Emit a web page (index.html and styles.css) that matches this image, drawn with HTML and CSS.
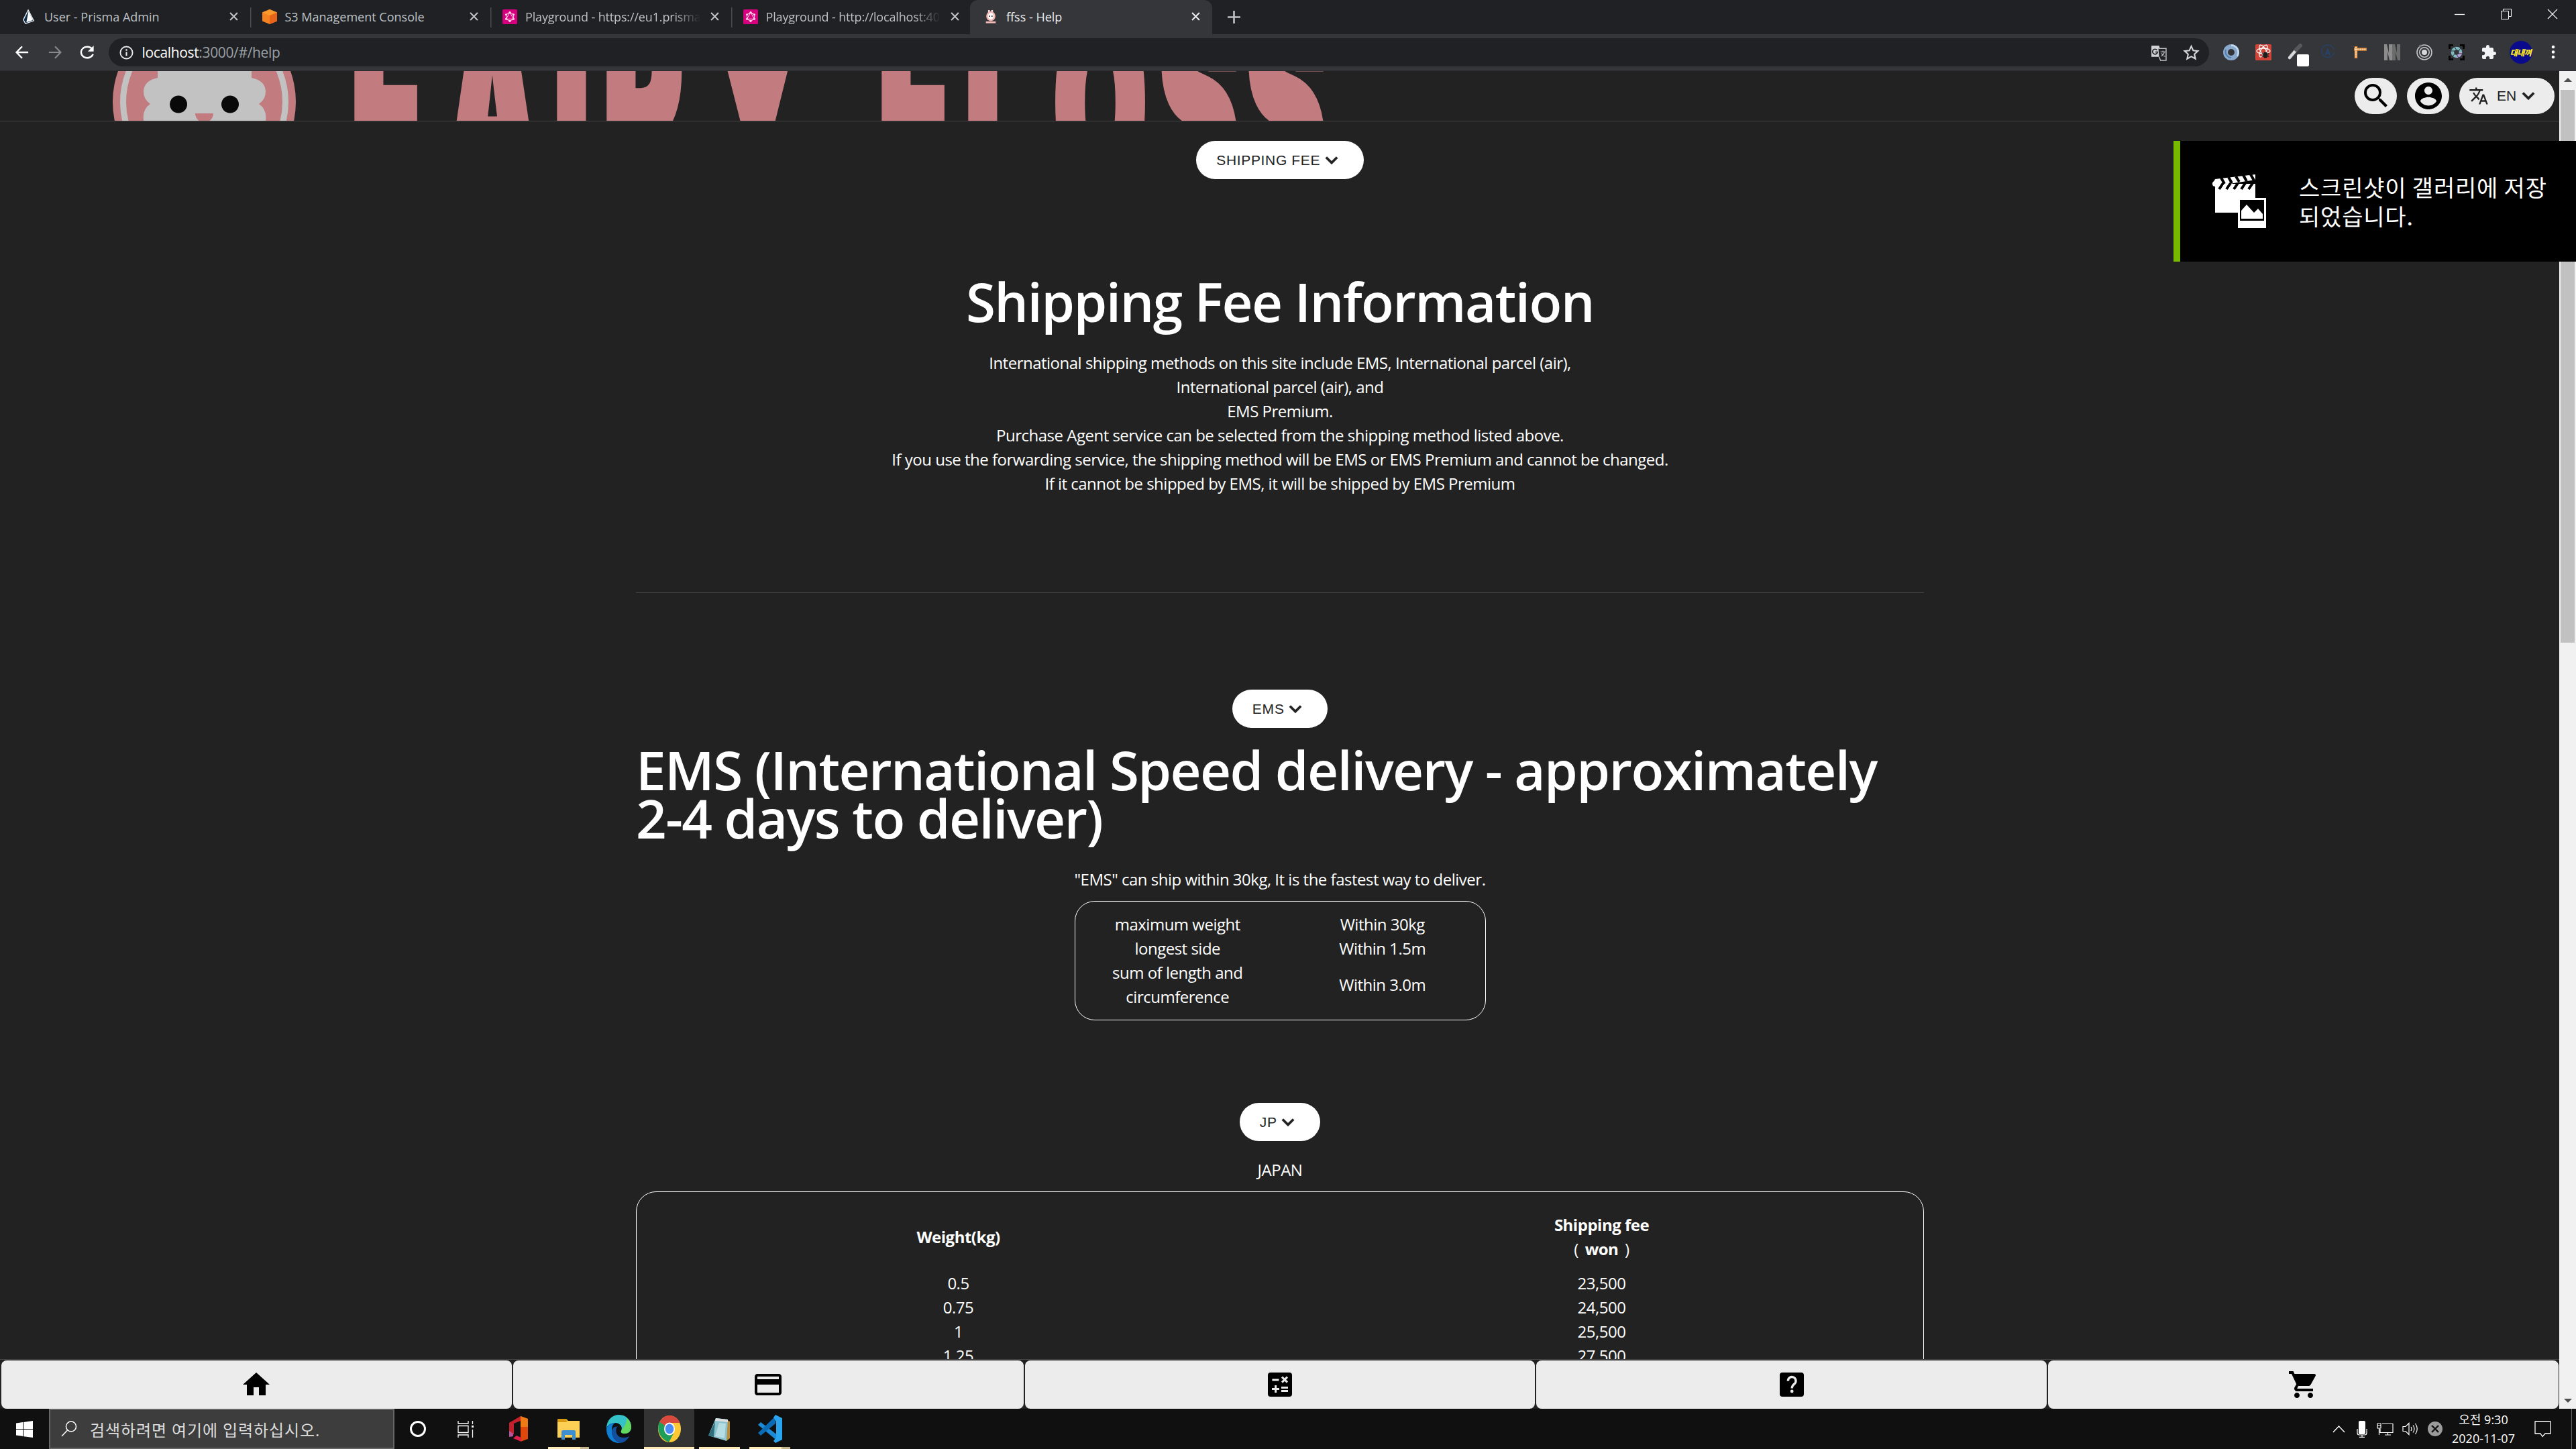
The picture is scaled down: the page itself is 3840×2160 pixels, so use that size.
FILE: index.html
```html
<!DOCTYPE html>
<html lang="en">
<head>
<meta charset="utf-8">
<title>ffss - Help</title>
<link rel="stylesheet" href="styles.css">
</head>
<body>
<svg width="0" height="0" class="defs">
  <defs>
    <symbol id="chevron" viewBox="0 0 24 24"><path d="M16.59 8.09 12 12.67 7.41 8.09 5.7 9.8l6.3 6.3 6.3-6.3z"/></symbol>
    <symbol id="close" viewBox="0 0 12 12"><path d="M1 1l10 10M11 1L1 11" stroke="currentColor" stroke-width="2" fill="none"/></symbol>
    <symbol id="graphql" viewBox="0 0 24 24"><rect width="24" height="24" rx="2" fill="#d6007e"/><path d="M12 5l6 3.5v7L12 19l-6-3.500v-7zM12 5l6 10.500H6z" fill="none" stroke="#fbd" stroke-width="1.200"/><g fill="#fde"><circle cx="12" cy="5" r="1.700"/><circle cx="18" cy="8.500" r="1.700"/><circle cx="18" cy="15.500" r="1.700"/><circle cx="12" cy="19" r="1.700"/><circle cx="6" cy="15.500" r="1.700"/><circle cx="6" cy="8.500" r="1.700"/></g></symbol>
  </defs>
</svg>

<div class="tabstrip">
  <div class="tab"><svg class="fav" viewBox="0 0 24 24"><path d="M11 1 3 17l3.500 6L20 18.500z" fill="#0f2d4a" stroke="#dfe6ee" stroke-width="1.500"/><path d="M11.500 3 8 21l10.500-3.500z" fill="#fff"/></svg><span class="tab-title">User - Prisma Admin</span><svg class="x"><use href="#close"/></svg></div>
  <div class="tab sep"><svg class="fav" viewBox="0 0 24 24"><path d="M12 0l12 5v14l-12 5L0 19V5z" fill="#f58220"/><path d="M12 0l12 5-12 5L0 5z" fill="#fb9a2c"/><path d="M12 10l12-5v14l-12 5z" fill="#e8641b"/></svg><span class="tab-title">S3 Management Console</span><svg class="x"><use href="#close"/></svg></div>
  <div class="tab sep"><svg class="fav"><use href="#graphql"/></svg><span class="tab-title fade">Playground - https://eu1.prisma.</span><svg class="x"><use href="#close"/></svg></div>
  <div class="tab sep"><svg class="fav"><use href="#graphql"/></svg><span class="tab-title fade">Playground - http://localhost:40</span><svg class="x"><use href="#close"/></svg></div>
  <div class="tab active"><svg class="fav" viewBox="0 0 24 24"><path d="M9 7V1M14 7V1" stroke="#f7d5d3" stroke-width="3"/><ellipse cx="12" cy="11" rx="7.500" ry="8" fill="#f3b9b6"/><ellipse cx="12" cy="11" rx="4.500" ry="5.500" fill="#fff"/><circle cx="10" cy="11" r="1"/><circle cx="14" cy="11" r="1"/><path d="M4 21h16" stroke="#f3b9b6" stroke-width="3"/></svg><span class="tab-title">ffss - Help</span><svg class="x"><use href="#close"/></svg></div>
  <svg class="plus" viewBox="0 0 18 18"><path d="M9 0v18M0 9h18" stroke="#bdc1c6" stroke-width="2.500"/></svg>
  <div class="winctl">
    <svg viewBox="0 0 16 16"><path d="M0 8.500h15" stroke="#fff" stroke-width="1.300"/></svg>
    <svg viewBox="0 0 16 16"><path d="M.5 3.500h11v12H.5zM3.500 3.500v-3h12v11h-4" stroke="#fff" fill="none"/></svg>
    <svg viewBox="0 0 16 16"><path d="M1 1l14 14M15 1L1 15" stroke="#fff" stroke-width="1.200"/></svg>
  </div>
</div>

<div class="toolbar">
  <svg class="tb" viewBox="0 0 24 24"><path d="M22 12H3M12 2.500 2.800 12l9.200 9.500" stroke="#fff" stroke-width="2.600" fill="none"/></svg>
  <svg class="tb" viewBox="0 0 24 24"><path d="M2 12h19M12 2.500l9.200 9.500-9.200 9.500" stroke="#85888c" stroke-width="2.400" fill="none"/></svg>
  <svg class="tb" viewBox="0 0 24 24"><path d="M20 6.500A10 9 0 1 0 21.500 15" stroke="#fff" stroke-width="2.600" fill="none"/><path d="M22.500 1v9.500H13z" fill="#fff"/></svg>
  <div class="omnibox">
    <svg class="info" viewBox="0 0 22 22"><circle cx="11" cy="11" r="9.500" stroke="#e8eaed" stroke-width="2" fill="none"/><path d="M11 10v6M11 5.500v2.500" stroke="#e8eaed" stroke-width="2.200"/></svg>
    <span class="url"><b>localhost</b>:3000/#/help</span>
    <svg class="ob" viewBox="0 0 24 24"><path d="M2 2h11l4 16H2z" fill="#d0d2d5"/><path d="M12 6h11v17H15l-2-5" fill="#202124" stroke="#bdc1c6" stroke-width="1.400"/><path d="M10 8.300A3.600 3.600 0 1 0 10.800 11H7.500" fill="none" stroke="#202124" stroke-width="1.600"/><path d="M15 11h7M18.500 9v2M20.500 11c-.5 3-2.500 5-4.500 6M16.500 13c1 2 3 4 5 4.500" stroke="#bdc1c6" fill="none" stroke-width="1.200"/></svg>
    <svg class="ob" viewBox="0 0 24 24"><path d="M12 2.800l2.800 6.200 6.700.7-5 4.500 1.400 6.600L12 17.400l-5.900 3.400 1.400-6.600-5-4.500 6.700-.7z" fill="none" stroke="#d7d9dc" stroke-width="2"/></svg>
  </div>
  <div class="exts">
    <svg viewBox="0 0 24 24"><circle cx="12" cy="12" r="8.500" fill="none" stroke="#88a9cb" stroke-width="7"/><path d="M12 1.500a10.500 10.500 0 0 1 9 16" fill="none" stroke="#c7dcf0" stroke-width="2.500"/><path d="M4 8a9 9 0 0 0 8 12" fill="none" stroke="#557fae" stroke-width="2"/></svg>
    <svg viewBox="0 0 24 24"><rect width="24" height="24" rx="1.500" fill="#cf4438"/><g fill="none" stroke="#fff" stroke-width="1.300"><ellipse cx="12" cy="10" rx="10" ry="4"/><ellipse cx="12" cy="10" rx="10" ry="4" transform="rotate(60 12 10)"/><ellipse cx="12" cy="10" rx="10" ry="4" transform="rotate(120 12 10)"/></g><ellipse cx="15" cy="16" rx="3.500" ry="4.500" fill="#1c1c1c"/><path d="M9.500 13l11 6M9.500 19l11-6M10 16h10" stroke="#1c1c1c"/></svg>
    <svg viewBox="0 0 24 24" class="pip"><path d="M3 20 14 7" stroke="#d8d8d8" stroke-width="4.500" stroke-linecap="round"/><path d="M13 8l6-6" stroke="#55585c" stroke-width="6" stroke-linecap="round"/><rect x="14" y="15" width="18" height="18" rx="2" fill="#fff"/></svg>
    <svg viewBox="0 0 24 24"><path d="M21 7.500A9.300 9.300 0 1 0 21.300 12" fill="none" stroke="#25446b" stroke-width="1.400"/><path d="M8.500 16.500l3.500-9 3.500 9M9.800 13.500h4.500" stroke="#25446b" stroke-width="2" fill="none"/></svg>
    <svg viewBox="0 0 24 24"><path d="M6 3v18M3 7.500h19" stroke="#d98237" stroke-width="4.500"/><path d="M6 4v16M4 7.500h17" stroke="#f8dfb8" stroke-width="2" stroke-dasharray="2 .7"/></svg>
    <svg viewBox="0 0 24 24"><path d="M0 0h4l3 13V0h5v24H8L5 11v13H0z" fill="#8c8c8c"/><path d="M12 0h4l3 13V0h5v24h-4l-3-13v13h-5z" fill="#6c6c6c"/></svg>
    <svg viewBox="0 0 24 24"><circle cx="12" cy="12" r="11" fill="none" stroke="#c4c5c7" stroke-width="1.600"/><circle cx="12" cy="12" r="7.200" fill="none" stroke="#c4c5c7" stroke-width="1.600"/><circle cx="12" cy="12" r="4" fill="#d5d6d8"/><circle cx="6" cy="2.500" r="2" fill="#76787b"/></svg>
    <svg viewBox="0 0 24 24"><path d="M1.500 7V1.500H7M17 1.500h5.500V7M22.500 17v5.500H17M7 22.500H1.500V17" fill="none" stroke="#050505" stroke-width="3"/><circle cx="12" cy="12" r="6" fill="none" stroke="#7fb9bd" stroke-width="4.500"/><path d="M12 18a6 6 0 0 0 6-6" fill="none" stroke="#b9a3dc" stroke-width="4.500"/><path d="M9 4l3 5M18 6l-3.500 5M20 14h-6M15 20l-3-5M6 18l4-4.500M4 10h6" stroke="#2b3440" stroke-width="1"/></svg>
    <svg viewBox="0 0 24 24"><path d="M20.500 11H19V7c0-1.100-.9-2-2-2h-4V3.500a2.500 2.500 0 0 0-5 0V5H4c-1.100 0-1.990.9-1.990 2v3.800H3.500a2.700 2.700 0 0 1 0 5.400H2V20c0 1.100.9 2 2 2h3.800v-1.500a2.700 2.700 0 0 1 5.400 0V22H17c1.100 0 2-.9 2-2v-4h1.500a2.500 2.500 0 0 0 0-5z" fill="#f1f3f4"/></svg>
    <span class="avatar">대내껴</span>
    <svg viewBox="0 0 24 24"><g fill="#fff"><circle cx="12" cy="4" r="2.300"/><circle cx="12" cy="11.500" r="2.300"/><circle cx="12" cy="19" r="2.300"/></g></svg>
  </div>
</div>

<div class="viewport">
  <div class="page">
    <header class="apphead">
      <svg class="logo" viewBox="160 106 1840 74">
        <circle cx="304.500" cy="152" r="136.500" fill="#c27c80"/>
        <circle cx="304.500" cy="152" r="121" fill="none" stroke="#c2c2c2" stroke-width="9"/>
        <path d="M235 96v20q-20 4-21 20 0 12 10 19-12 8-10 24 2 16 20 20h142q18-4 20-20 2-16-10-24 10-7 10-19-1-16-21-20V96z" fill="#c2c2c2"/>
        <ellipse cx="266" cy="155.500" rx="13" ry="13" fill="#090909"/><ellipse cx="343" cy="155.500" rx="13" ry="13" fill="#090909"/>
        <path d="M291 169h27q0 8-9 14h-9q-9-6-9-14z" fill="#c27c80"/>
        <text class="wordmark" transform="translate(0 297) scale(1 2.240)" y="0" x="524 664 826 900 1060 1260 1310 1439 1571 1727 1857">FAIRY FLOSS</text>
      </svg>
      <div class="headbtns">
        <span class="rbtn"><svg viewBox="0 0 24 24"><path d="M15.500 14h-.79l-.28-.27A6.471 6.471 0 0 0 16 9.500 6.500 6.500 0 1 0 9.500 16c1.610 0 3.090-.59 4.230-1.570l.27.28v.79l5 4.990L20.490 19l-4.990-5zm-6 0C7.010 14 5 11.990 5 9.500S7.010 5 9.500 5 14 7.010 14 9.500 11.990 14 9.500 14z"/></svg></span>
        <span class="rbtn"><svg viewBox="0 0 24 24"><path d="M12 2C6.480 2 2 6.480 2 12s4.480 10 10 10 10-4.480 10-10S17.520 2 12 2zm0 3c1.660 0 3 1.340 3 3s-1.340 3-3 3-3-1.340-3-3 1.340-3 3-3zm0 14.200c-2.500 0-4.710-1.280-6-3.220.03-1.990 4-3.080 6-3.080 1.990 0 5.970 1.090 6 3.080-1.290 1.940-3.500 3.220-6 3.220z"/></svg></span>
        <span class="rbtn lang"><svg class="tr" viewBox="0 0 24 24"><path d="M12.870 15.070l-2.540-2.510.03-.03A17.520 17.520 0 0 0 14.070 6H17V4h-7V2H8v2H1v1.990h11.170C11.500 7.920 10.440 9.750 9 11.350 8.070 10.320 7.300 9.190 6.690 8h-2c.73 1.630 1.730 3.170 2.980 4.560l-5.090 5.020L4 19l5-5 3.110 3.110.76-2.040zM18.500 10h-2L12 22h2l1.120-3h4.750L21 22h2l-4.500-12zm-2.620 7l1.620-4.330L19.120 17h-3.240z"/></svg><span>EN</span><svg class="chev"><use href="#chevron"/></svg></span>
      </div>
    </header>

    <main class="content">
      <button class="pill first"><span>SHIPPING FEE</span><svg class="chev"><use href="#chevron"/></svg></button>
      <h1>Shipping Fee Information</h1>
      <p class="intro">International shipping methods on this site include EMS, International parcel (air),<br>International parcel (air), and<br>EMS Premium.<br>Purchase Agent service can be selected from the shipping method listed above.<br>If you use the forwarding service, the shipping method will be EMS or EMS Premium and cannot be changed.<br>If it cannot be shipped by EMS, it will be shipped by EMS Premium</p>
      <hr>
      <button class="pill"><span>EMS</span><svg class="chev"><use href="#chevron"/></svg></button>
      <h2>EMS (International Speed delivery - approximately<br>2-4 days to deliver)</h2>
      <p class="lead">"EMS" can ship within 30kg, It is the fastest way to deliver.</p>
      <div class="box limits">
        <div>maximum weight</div><div>Within 30kg</div>
        <div>longest side</div><div>Within 1.5m</div>
        <div>sum of length and circumference</div><div>Within 3.0m</div>
      </div>
      <button class="pill jp"><span>JP</span><svg class="chev"><use href="#chevron"/></svg></button>
      <p class="country">JAPAN</p>
      <div class="box fees">
        <div class="th">Weight(kg)</div><div class="th">Shipping fee<br><span class="unit"><i>(</i> won <i>)</i></span></div>
        <div>0.5</div><div>23,500</div>
        <div>0.75</div><div>24,500</div>
        <div>1</div><div>25,500</div>
        <div>1.25</div><div>27,500</div>
      </div>
    </main>

    <nav class="bottomnav">
      <span><svg viewBox="0 0 24 24"><path d="M10 20v-6h4v6h5v-8h3L12 3 2 12h3v8z"/></svg></span>
      <span><svg viewBox="0 0 24 24"><path d="M20 4H4c-1.110 0-1.990.89-1.990 2L2 18c0 1.110.89 2 2 2h16c1.110 0 2-.89 2-2V6c0-1.110-.89-2-2-2zm0 14H4v-6h16v6zm0-10H4V6h16v2z"/></svg></span>
      <span><svg viewBox="0 0 24 24"><rect x="3" y="3" width="18" height="18" rx="2"/><path d="M6.200 8.500h5M6 15.300h5.500M8.800 12.500V18M13 14.200h5M13 16.800h5M13.500 6.300l4 4M17.500 6.300l-4 4" stroke="#ececec" stroke-width="1.500" fill="none"/></svg></span>
      <span><svg viewBox="0 0 24 24"><rect x="3" y="3" width="18" height="18" rx="2"/><path d="M9.200 9.300a2.900 2.900 0 1 1 5 1.900c-1.200 1.100-2.100 1.700-2.100 3.500" stroke="#ececec" stroke-width="1.700" fill="none"/><circle cx="12.100" cy="17" r="1.200" fill="#ececec"/></svg></span>
      <span><svg viewBox="0 0 24 24"><path d="M7 18c-1.100 0-1.990.9-1.990 2S5.900 22 7 22s2-.9 2-2-.9-2-2-2zM1 2v2h2l3.600 7.590-1.350 2.450c-.16.28-.25.61-.25.96 0 1.100.9 2 2 2h12v-2H7.420c-.14 0-.25-.11-.25-.25l.03-.12.9-1.630h7.450c.75 0 1.410-.41 1.750-1.030l3.580-6.490A1.003 1.003 0 0 0 20 4H5.210l-.94-2H1zm16 16c-1.100 0-1.990.9-1.990 2s.89 2 1.990 2 2-.9 2-2-.9-2-2-2z"/></svg></span>
    </nav>
  </div>
  <div class="scrollbar">
    <svg viewBox="0 0 12 6"><path d="M0 6l6-6 6 6z" fill="#505050"/></svg>
    <div class="thumb"></div>
    <svg class="down" viewBox="0 0 12 6"><path d="M0 0l6 6 6-6z" fill="#505050"/></svg>
  </div>
</div>

<div class="toast">
  <svg viewBox="0 0 80 80"><path d="M0 14l4-7 60-7v8L6 17z" fill="#fff"/><path d="M13 5l5 9M24 4l5 9M35 3l5 8M46 1l5 9M57 0l5 9" stroke="#000" stroke-width="4"/><circle cx="4" cy="14" r="4" fill="#fff"/><path d="M4 14h60v21H38v22H4z" fill="#fff"/><path d="M16 13l-6 9M27 13l-6 9M38 13l-6 9M49 13l-6 9M60 13l-6 9" stroke="#000" stroke-width="4"/><path d="M38 35h42v45H38z" fill="#fff"/><path d="M41 38h36v31H41z" fill="#000"/><path d="M43 66V54l8-9 11 12 6-6 7 8v7z" fill="#fff"/></svg>
  <p>스크린샷이 갤러리에 저장<br>되었습니다.</p>
</div>

<footer class="taskbar">
  <div class="cell start"><svg width="25" height="25" viewBox="0 0 24 24"><path d="M0 3.300 10 2v9.500H0zM11 1.800 24 0v11.500H11zM0 12.500h10V22L0 20.600zM11 12.500h13V24l-13-1.800z" fill="#fff"/></svg></div>
  <div class="search"><svg width="24" height="24" viewBox="0 0 24 24"><circle cx="15" cy="8.500" r="7.500" fill="none" stroke="#fff" stroke-width="1.500"/><path d="M9.500 14 1 23" stroke="#fff" stroke-width="1.500"/></svg><span>검색하려면 여기에 입력하십시오.</span></div>
  <div class="cell"><svg width="26" height="26" viewBox="0 0 26 26"><circle cx="13" cy="13" r="10.500" fill="none" stroke="#fff" stroke-width="3"/></svg></div>
  <div class="cell tv"><svg width="25" height="25" viewBox="0 0 25 25"><path d="M1 0v4h15V0M1 25v-4h15v4M1 7.500h15v10H1zM22.500 0v5M22.500 13v12" fill="none" stroke="#fff" stroke-width="1.300"/><path d="M21 7h3v3h-3z" fill="#fff"/></svg></div>
  <div class="cell"><svg width="28" height="38" viewBox="0 0 28 38"><path d="M0 10 17 0v7L7 11v16l-7 3z" fill="#c3202c"/><path d="M0 22l6 4v4l-6 1z" fill="#b5549e"/><path d="M17 0l11 4v30l-11 4z" fill="#e0470b"/><path d="M17 0l11 4v12H17z" fill="#ee7a13"/><path d="M6 33l5-4 7 3v6z" fill="#e0204a"/></svg></div>
  <div class="cell run more"><svg width="33" height="31" viewBox="0 0 33 31"><path d="M0 2q0-2 2-2h11l3 3h17v25H0z" fill="#fccf55"/><path d="M0 2q0-2 2-2h11l2 3-2 2H0z" fill="#d99a10"/><path d="M6 31V19q0-2 2-2h17q2 0 2 2v12h-5v-7H11v7z" fill="#3d8fd1"/></svg></div>
  <div class="cell"><svg width="37" height="42" viewBox="0 0 37 42"><path d="M0 21C0 8 8 0 19 0s18 9 18 18c0 7-5 10-10 10-4 0-6-2-5-4 3-6-2-12-9-12C6 12 1 16 0 21z" fill="#35c1c8"/><path d="M30 5c5 3 7 9 7 13 0 7-5 10-10 10-4 0-6-2-5-4 4-7 9-10 8-19z" fill="#62d95f"/><path d="M0 21c1-5 6-9 13-9-5 3-5 8-5 12 0 9 6 16 13 18C8 43 0 34 0 21z" fill="#0f7fd6"/><path d="M16 18c-3 4-2 12 4 15 5 2 10 1 14-1-3 6-8 10-14 10C12 40 8 32 8 26c0-6 4-9 8-8z" fill="#124f9e"/></svg></div>
  <div class="cell run chrome"><svg width="34" height="40" viewBox="0 0 34 40"><ellipse cx="17" cy="20" rx="17" ry="20" fill="#fcc934"/><path d="M17 20 2 10C7 1 13 0 17 0c7 0 13 4 15.500 11H17z" fill="#d84a3e"/><path d="M17 20 2 9.500C-2 18 0 34 16 40l7-13z" fill="#1e9e58"/><ellipse cx="17" cy="20" rx="8" ry="9.500" fill="#fff"/><ellipse cx="17" cy="20" rx="6.300" ry="7.500" fill="#4c8bf5"/></svg></div>
  <div class="cell run"><svg width="33" height="37" viewBox="0 0 33 37"><path d="M26 4l6 3v25l-5 4z" fill="#b98c3c"/><path d="M11 2l18 2-2 32L0 28z" fill="#8cc3cf"/><path d="M11 2l18 2v4L10 6z" fill="#d9dedf"/><path d="M10 7 0 28l8 2z" fill="#2f6e7c"/><path d="M16 9l10 1-2 22-14-3z" fill="#b5dde3"/></svg></div>
  <div class="cell run more"><svg width="36" height="42" viewBox="0 0 36 42"><path d="M0 15l4-4 26 20v9z" fill="#1c8ad6"/><path d="M0 27l4 4L26 13V2z" fill="#0b6bb5"/><path d="M26 0l10 5v32l-10 5-3-3 4-5V10l-4-6z" fill="#2aa4ee"/></svg></div>
  <div class="tray">
    <svg class="caret" width="19" height="11" viewBox="0 0 19 11"><path d="M1 10l8.500-9L18 10" fill="none" stroke="#fff" stroke-width="1.400"/></svg>
    <svg width="16" height="25" viewBox="0 0 16 25"><rect x="3" width="10" height="20" rx="2" fill="#fff"/><path d="M1 12v6q0 3 3 3h8q3 0 3-3v-6M8 21v3M4 24.300h8" fill="none" stroke="#fff" stroke-width="1.200"/></svg>
    <svg width="25" height="19" viewBox="0 0 25 19"><path d="M8 1.500h16v13H5V9M12 18h9M16.500 14.500V18M1 1h5v7H1zM1 4h5M3.500 8v10" fill="none" stroke="#fff" stroke-width="1.200"/></svg>
    <svg width="24" height="20" viewBox="0 0 24 20"><path d="M1 6.500h4l5-5v17l-5-5H1zM13 7q2 3 0 6M16 4.500q4 5.500 0 11M19.500 2q5.500 8 0 16" fill="none" stroke="#fff" stroke-width="1.200"/></svg>
    <svg width="22" height="22" viewBox="0 0 22 22"><circle cx="11" cy="11" r="11" fill="#9b9b9b"/><path d="M6 6l10 10M16 6L6 16" stroke="#111" stroke-width="2.400"/></svg>
    <div class="clock"><div>오전 9:30</div><div>2020-11-07</div></div>
    <svg class="noti" width="25" height="25" viewBox="0 0 25 25"><path d="M1 1h23v18h-8l-4 4.500L9 19H1z" fill="none" stroke="#fff" stroke-width="1.300"/></svg>
  </div>
</footer>
</body>
</html>
```
FILE: styles.css
```css
* { box-sizing: border-box; }
body {
  margin: 0;
  width: 3840px;
  height: 2160px;
  overflow: hidden;
  display: flex;
  flex-direction: column;
  background: #222;
  color: #fff;
  font-family: "Open Sans", "Noto Sans CJK KR", sans-serif;
}
svg { display: block; flex: none; }
.defs { position: absolute; }

/* browser chrome */
.tabstrip {
  flex: none;
  height: 51px;
  padding-left: 14px;
  display: flex;
  background: #202124;
  color: #bdc1c6;
  font-size: 18px;
}
.tab {
  width: 358.5px;
  padding: 0 18px 2px 18px;
  display: flex;
  align-items: center;
}
.sep { background: linear-gradient(#4a4c50, #4a4c50) 0 11px / 1.5px 30px no-repeat; }
.fav { width: 22px; height: 24px; margin-right: 12px; }
.tab-title { flex: 1; white-space: nowrap; overflow: hidden; }
.fade { letter-spacing: -.15px; mask-image: linear-gradient(90deg, #000 84%, transparent 99%); }
.x { width: 13px; height: 13px; margin-left: 12px; }
.active {
  margin-left: -2px;
  width: 361px;
  padding-left: 20px;
  background: #35363a;
  border-radius: 12px 12px 0 0;
  color: #e8eaed;
}
.plus { width: 19px; height: 19px; margin: 16px 0 0 23px; }
.winctl { margin-left: auto; padding: 13px 27px 0 0; display: flex; gap: 53px; }
.winctl svg { width: 16px; height: 16px; }

.toolbar {
  flex: none;
  height: 55px;
  border-bottom: 1px solid #2a2b2e;
  padding-left: 22px;
  display: flex;
  align-items: center;
  background: #35363a;
}
.tb { width: 22px; height: 22px; margin-right: 26.500px; }
.omnibox {
  width: 3131px;
  height: 42px;
  margin-left: -6px;
  border-radius: 21px;
  background: #202124;
  display: flex;
  align-items: center;
  padding: 0 14px 0 16px;
  gap: 24px;
}
.info { width: 21px; height: 21px; }
.url { flex: 1; margin-left: -11px; font-size: 21px; letter-spacing: -.35px; color: #9aa0a6; }
.url b { font-weight: 400; color: #fff; }
.ob { width: 25px; height: 25px; }
.exts { display: flex; align-items: center; gap: 24px; margin-left: 21px; }
.exts svg { width: 24px; height: 24px; overflow: visible; }
.avatar {
  width: 34px;
  height: 34px;
  margin: 0 -5px;
  border-radius: 50%;
  background: #0a0a8c;
  color: #ffe81a;
  font: italic 900 12px/34px "Noto Sans CJK KR", sans-serif;
  letter-spacing: -.5px;
  text-align: center;
  white-space: nowrap;
}

/* page */
.viewport { flex: 1; min-height: 0; display: flex; }
.page { width: 3815px; display: flex; flex-direction: column; }
.apphead {
  flex: none;
  height: 75px;
  padding: 0 7px 0 160px;
  border-bottom: 1px solid #444;
  display: flex;
  justify-content: space-between;
}
.logo { width: 1840px; height: 74px; overflow: hidden; }
.wordmark { font: 900 178px Inter, sans-serif; fill: #c27c80; stroke: #c27c80; stroke-width: 8px; }
.headbtns { display: flex; gap: 15px; padding-top: 10px; }
.rbtn {
  width: 63px;
  height: 54px;
  border-radius: 27px;
  background: #ececec;
  display: flex;
  align-items: center;
  justify-content: center;
}
.rbtn svg { width: 48px; height: 48px; }
.lang {
  width: 142px;
  justify-content: flex-start;
  padding-left: 14px;
  color: #222;
  fill: #222;
  font: 21px "Liberation Sans", sans-serif;
}
.rbtn .tr { width: 30px; height: 30px; margin-right: 12px; }
.chev, .rbtn .chev { width: 36px; height: 36px; }

.content {
  flex: 1;
  min-height: 0;
  overflow: hidden;
  padding: 29px 947px 0 948px;
  display: flex;
  flex-direction: column;
  align-items: center;
  font-size: 24px;
  line-height: 36px;
  font-weight: 500;
  letter-spacing: -.5px;
  text-align: center;
}
.content > * { flex: none; }
.pill {
  height: 57px;
  border: 0;
  border-radius: 29px;
  padding: 0 30px 0 30px;
  background: #fff;
  color: #222;
  fill: #222;
  display: flex;
  align-items: center;
  font: 21px "Liberation Sans", sans-serif;
}
.pill span { letter-spacing: .8px; margin-right: -1.500px; }
.first span { letter-spacing: .65px; }
h1, h2 { margin: 0; font-size: 80px; line-height: 72px; font-weight: 600; letter-spacing: -1.600px; white-space: nowrap; }
h1 { margin-top: 146px; }
h2 { margin-top: 26px; width: 1920px; text-align: left; }
p { margin: 0; }
.intro, .lead { margin-top: 38px; }
hr { width: 100%; height: 1px; border: 0; margin: 144px 0; background: #444; }
.box { border: 1px solid #fff; border-radius: 30px; margin-top: 14px; display: grid; grid-template-columns: 1fr 1fr; align-items: center; }
.limits { width: 613px; padding: 16px 0; }
.limits div { padding: 0 40px; }
.jp { margin-top: 123px; }
.country { margin-top: 25px; }
.fees { width: 1920px; padding: 31px 0 40px; }
.th { font-weight: 700; margin-bottom: 15px; }
.unit { word-spacing: 4px; }
.unit i { font-style: normal; font-weight: 400; }

.bottomnav {
  flex: none;
  height: 74px;
  border-top: 1px solid #444;
  padding: 1px 1px 0 2px;
  display: flex;
  gap: 2px;
}
.bottomnav span {
  flex: 1;
  border-radius: 8px;
  background: #ececec;
  display: flex;
  align-items: center;
  justify-content: center;
}
.bottomnav svg { width: 48px; height: 48px; }

.scrollbar {
  width: 25px;
  background: #f1f1f1;
  display: flex;
  flex-direction: column;
  align-items: center;
}
.scrollbar svg { width: 12px; height: 6px; margin-top: 10px; }
.thumb { width: 21px; height: 824px; margin-top: 12px; background: #c1c1c1; }
.scrollbar .down { margin: auto 0 9px; }

.toast {
  position: absolute;
  left: 3240px;
  top: 210px;
  width: 600px;
  height: 180px;
  border-left: 10px solid #76b900;
  background: #000;
  display: flex;
  padding-left: 48px;
}
.toast svg { width: 80px; height: 80px; margin-top: 50px; }
.toast p { margin: 47px 0 0 49px; font: 400 34px/43px "Noto Sans CJK KR", sans-serif; letter-spacing: .8px; white-space: nowrap; }

/* taskbar */
.taskbar { flex: none; height: 60px; display: flex; background: #101010; }
.taskbar::after { content: ""; width: 1.500px; margin-right: 6px; background: #666; }
.cell { width: 75px; display: flex; align-items: center; justify-content: center; }
.start { width: 73px; }
.search {
  width: 515px;
  margin-right: -3px;
  border: 2px solid #666;
  background: #3d3d3d;
  display: flex;
  align-items: center;
  gap: 19px;
  padding-left: 16px;
  color: #ddd;
  font-size: 24px;
  letter-spacing: .9px;
}
.tv { padding-right: 6px; }
.run { background: linear-gradient(#fde9b5, #fde9b5) center bottom / 61px 3px no-repeat; }
.more { background: linear-gradient(90deg, #fde9b5 78%, #c5b58c 78%) center bottom / 61px 3px no-repeat; }
.chrome { background: linear-gradient(#fde9b5, #fde9b5) center bottom / 75px 3px no-repeat #333; }
.tray { margin-left: auto; display: flex; align-items: center; gap: 13.500px; padding-right: 30px; }
.caret { margin-right: 4px; }
.clock { width: 98px; margin: 0 13px 0 -1px; text-align: center; font-size: 18px; line-height: 28px; white-space: nowrap; }
```
